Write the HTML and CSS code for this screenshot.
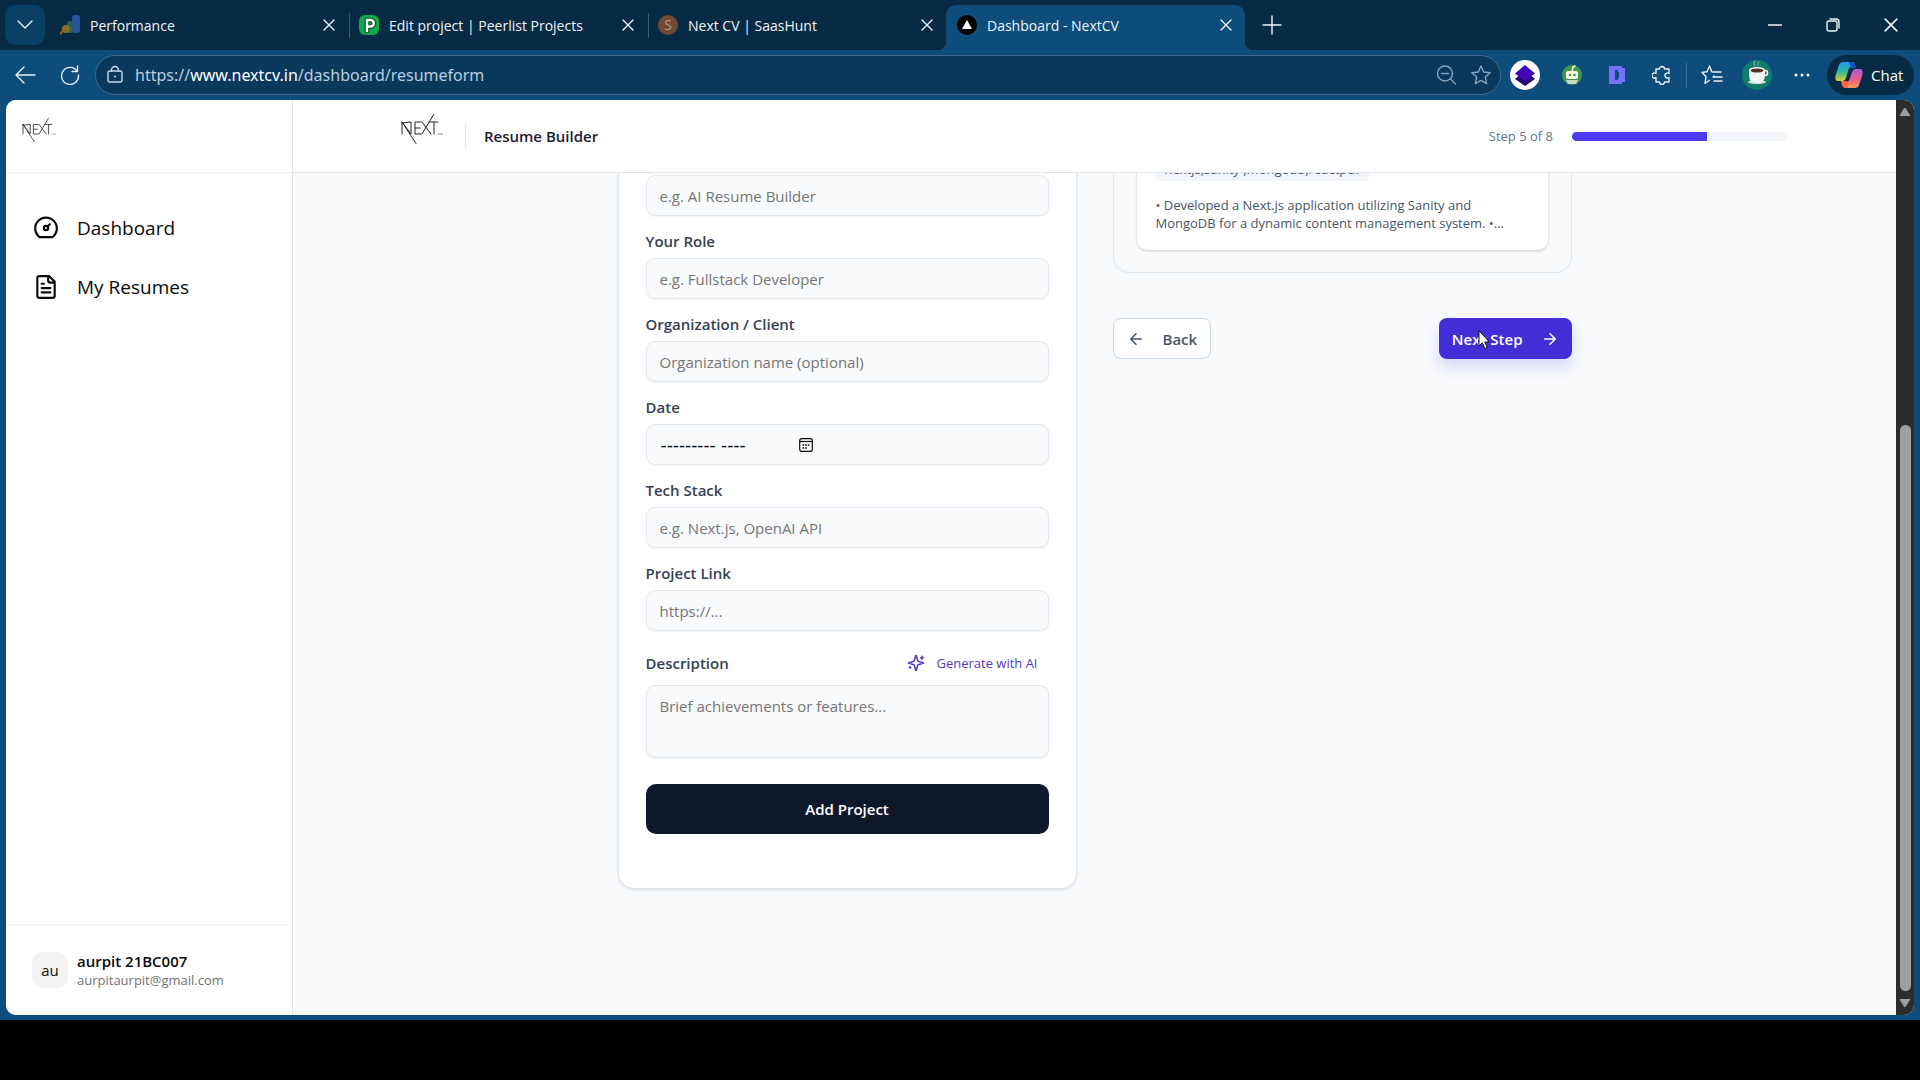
FILE: index.html
```html
<!DOCTYPE html>
<html lang="en">
<head>
<meta charset="utf-8">
<title>Dashboard - NextCV</title>
<link rel="stylesheet" href="styles.css">
</head>
<body>
<svg class="defs" aria-hidden="true">
  <defs>
    <symbol id="close" viewBox="0 0 12 12"><path d="M1 1l10 10M11 1L1 11" /></symbol>
    <symbol id="logo" viewBox="0 0 42 30">
      <path d="M1 20V8l9 12V8l-9 1M1 8l14 21.500M20 8h-6v12h6M14 14h5M21 8l9 12M21 20L33 0M28 8h9M33 8v12" />
      <path d="M37 20h5" stroke-opacity=".5" />
    </symbol>
  </defs>
</svg>
<div class="browser">
  <div class="tabstrip">
    <button class="tab-menu" aria-label="Tab actions"><svg width="16" height="10" viewBox="0 0 16 10"><path d="M1 1l7 7 7-7"/></svg></button>
    <div class="tabs">
      <div class="tab">
        <svg class="favicon" viewBox="0 0 20 20"><rect x="12" y="0" width="8" height="18" rx="3" fill="#2c539d"/><rect x="7" y="6" width="7" height="12" rx="3" fill="#27605c"/><circle cx="6" cy="14" r="4" fill="#8d6a27"/><path d="M4 15l-4 4" stroke="#8d6a27" stroke-width="2"/></svg>
        <span class="tab-title">Performance</span>
        <button class="tab-close" aria-label="Close tab"><svg width="12" height="12"><use href="#close"/></svg></button>
      </div>
      <div class="tab divided">
        <svg class="favicon" viewBox="0 0 20 20"><rect width="20" height="20" rx="6" fill="#12a84a"/><path d="M8 16V5h3.500a3.200 3.200 0 0 1 0 6.500H8" fill="none" stroke="#0a5a2a" stroke-width="5"/><path d="M8 16V5h3.500a3.200 3.200 0 0 1 0 6.500H8" fill="none" stroke="#fff" stroke-width="2.400"/></svg>
        <span class="tab-title">Edit project | Peerlist Projects</span>
        <button class="tab-close" aria-label="Close tab"><svg width="12" height="12"><use href="#close"/></svg></button>
      </div>
      <div class="tab divided">
        <span class="favicon letter-icon">S</span>
        <span class="tab-title">Next CV | SaasHunt</span>
        <button class="tab-close" aria-label="Close tab"><svg width="12" height="12"><use href="#close"/></svg></button>
      </div>
      <div class="tab active">
        <svg class="favicon" viewBox="0 0 20 20"><circle cx="10" cy="10" r="10"/><path d="M10 5l5 9H5z" fill="#fff"/></svg>
        <span class="tab-title">Dashboard - NextCV</span>
        <button class="tab-close" aria-label="Close tab"><svg width="12" height="12"><use href="#close"/></svg></button>
      </div>
    </div>
    <button class="new-tab" aria-label="New tab"><svg width="20" height="20" viewBox="0 0 20 20"><path d="M10 1v18M1 10h18"/></svg></button>
    <div class="window-controls">
      <button aria-label="Minimize"><svg width="14" height="14" viewBox="0 0 14 14"><path d="M0 7h14"/></svg></button>
      <button aria-label="Restore"><svg width="14" height="14" viewBox="0 0 14 14"><rect x="1" y="3" width="10" height="10" rx="2"/><path d="M4 1h6a3 3 0 0 1 3 3v6"/></svg></button>
      <button aria-label="Close window"><svg width="14" height="14" viewBox="0 0 12 12"><use href="#close"/></svg></button>
    </div>
  </div>

  <div class="toolbar">
    <button class="tool" aria-label="Back"><svg width="22" height="20" viewBox="0 0 22 20"><path d="M10 2l-8 8 8 8M2 10h19"/></svg></button>
    <button class="tool" aria-label="Reload"><svg width="20" height="20" viewBox="0 0 20 20"><path d="M17 6a8.500 8.500 0 1 0 1.500 4M17.500 1v5.500H12"/></svg></button>
    <div class="address">
      <svg width="18" height="20" viewBox="0 0 18 20"><rect x="2" y="6" width="14" height="11" rx="2"/><path d="M5.500 6V5a3.500 3.500 0 0 1 7 0v1"/><circle cx="9" cy="11.500" r="1" fill="#cbd9e8" stroke="none"/></svg>
      <span class="url">https://<b>www.nextcv.in</b>/dashboard/resumeform</span>
      <button class="in-address" aria-label="Zoom"><svg width="20" height="20" viewBox="0 0 20 20"><circle cx="9" cy="8.500" r="7.500"/><path d="M14.500 14l5 5M5.500 8.500h7"/></svg></button>
      <button class="in-address" aria-label="Favorite this page"><svg width="20" height="20" viewBox="0 0 20 20"><path d="M10 1l2.700 6 6.500.7-4.900 4.400 1.400 6.500L10 15.300l-5.700 3.300 1.400-6.500L.8 7.700 7.300 7z"/></svg></button>
    </div>
    <div class="extensions">
      <button aria-label="Layers extension"><svg width="30" height="30" viewBox="0 0 30 30"><circle cx="15" cy="15" r="15" fill="#fff"/><path d="M15 10l10 9-10 7-10-7z" fill="#260070"/><path d="M15 5l10 8.500L15 21 5 13.500z" fill="#4305b5"/></svg></button>
      <button aria-label="Robot extension"><svg width="20" height="20" viewBox="0 0 20 20"><circle cx="10" cy="10" r="10" fill="#439650"/><path d="M10 7l1-5 2-1" stroke="#f3f6dc" stroke-width="1.500" fill="none"/><rect x="4" y="6" width="12" height="8" rx="2" fill="#f3f6dc"/><circle cx="8" cy="10" r="1.300" fill="#439650"/><circle cx="12.500" cy="10" r="1.300" fill="#439650"/><path d="M5 16h10M6 18h8" stroke="#f3f6dc" stroke-width="1.500"/></svg></button>
      <button aria-label="D extension"><svg width="16" height="18" viewBox="0 0 16 18"><path fill-rule="evenodd" fill="#7770fb" d="M0 0h13v2h3v14h-3v2H0zM6 4v10h3v-2h1V6H9V4z"/></svg></button>
      <button aria-label="Extensions"><svg width="20" height="20" viewBox="0 0 20 20"><path d="M4 4h3.500a2.500 2.500 0 1 1 5 0H17v4.500a2.500 2.500 0 1 0 0 4V17h-4.500a2.500 2.500 0 1 1-5 0H4v-4.500a2.500 2.500 0 1 1 0-4z"/></svg></button>
      <span class="rule"></span>
      <button aria-label="Favorites"><svg width="22" height="20" viewBox="0 0 22 20"><path d="M12 12l1-1M13 7l-2.200-.2L8.500 1 6 6.800 1 7.400l4 4.200L4 18.500l4.500-3.300M12.500 7H20M13 12h8M13 16h8"/></svg></button>
      <button aria-label="Profile"><svg width="30" height="30" viewBox="0 0 30 30"><circle cx="15" cy="15" r="15" fill="#0e7d6a"/><ellipse cx="15" cy="22" rx="9" ry="2" fill="#cfd9d6"/><circle cx="23" cy="13" r="2.500" fill="none" stroke="#fff" stroke-width="1.500"/><path d="M7 10h16v5q0 8-8 8t-8-8z" fill="#f4f4f2"/><ellipse cx="15" cy="10" rx="8" ry="3" fill="#fff"/><ellipse cx="15" cy="10.500" rx="6.500" ry="2" fill="#59301f"/><path d="M13 6q-2-2 0-5M16 5q-1-1 1-3" stroke="#64aa9e" fill="none"/></svg></button>
      <button aria-label="Settings and more"><svg width="18" height="4" viewBox="0 0 18 4"><g fill="#fff" stroke="none"><circle cx="3" cy="2" r="1.500"/><circle cx="9" cy="2" r="1.500"/><circle cx="15" cy="2" r="1.500"/></g></svg></button>
    </div>
    <button class="chat">
      <svg width="28" height="26" viewBox="0 0 28 26">
        <defs>
          <linearGradient id="cool" x1="0" y1="0" x2="0" y2="1"><stop offset="0" stop-color="#209bf0"/><stop offset=".5" stop-color="#29b99f"/><stop offset="1" stop-color="#e9cb32"/></linearGradient>
          <linearGradient id="warm" x1="0" y1="0" x2="0" y2="1"><stop offset="0" stop-color="#a75bdf"/><stop offset=".5" stop-color="#ec5b8e"/><stop offset="1" stop-color="#fc9a52"/></linearGradient>
        </defs>
        <path d="M8 0h9q3 0 3 5h-4q-2 0-3 4l-2 7q-1 3-4 3H3q-4 0-2-7l3-9q1-3 4-3z" fill="url(#cool)"/>
        <path d="M14 0h3q3 0 4 6h-5z" fill="#1c4fd0"/>
        <path d="M20 26h-9q-3 0-4-6h4q3 0 4-4l2-6q1-3 4-3h4q4 0 2 7l-3 9q-1 3-4 3z" fill="url(#warm)"/>
        <path d="M13 26h-3q-3 0-4-7h6z" fill="#f5683c"/>
      </svg>
      Chat
    </button>
  </div>

  <div class="viewport">
    <aside class="sidebar">
      <div class="brand"><svg width="34" height="24" role="img" aria-label="NEXT"><use href="#logo"/></svg></div>
      <nav class="nav">
        <a href="#dashboard"><svg width="26" height="26" viewBox="0 0 24 24"><path d="M6 20.400a10 10 0 1 1 12 0zM13.400 10.600L15.500 8.500"/><circle cx="12" cy="12" r="2"/></svg>Dashboard</a>
        <a href="#resumes"><svg width="26" height="26" viewBox="0 0 24 24"><path d="M15 2H6a2 2 0 0 0-2 2v16a2 2 0 0 0 2 2h12a2 2 0 0 0 2-2V7zM14 2v4a2 2 0 0 0 2 2h4M10 9H8M16 13H8M16 17H8"/></svg>My Resumes</a>
      </nav>
      <div class="user">
        <span class="avatar">au</span>
        <div><div class="user-name">aurpit 21BC007</div><div class="user-mail">aurpitaurpit@gmail.com</div></div>
      </div>
    </aside>

    <div class="page">
      <header class="page-header">
        <svg class="header-logo" width="42" height="30" role="img" aria-label="NEXT"><use href="#logo"/></svg>
        <h1>Resume Builder</h1>
        <span class="step">Step 5 of 8</span>
        <div class="progress"><div class="progress-fill" style="width:62.5%"></div></div>
      </header>
      <main class="content">
        <form class="form-card">
          <input class="field" type="text" aria-label="Project title" placeholder="e.g. AI Resume Builder">
          <label for="role">Your Role</label>
          <input class="field" id="role" type="text" placeholder="e.g. Fullstack Developer">
          <label for="org">Organization / Client</label>
          <input class="field" id="org" type="text" placeholder="Organization name (optional)">
          <label for="date">Date</label>
          <div class="field date-field">
            <input id="date" type="text" value="--------- ----">
            <button type="button" aria-label="Pick a month"><svg width="14" height="14" viewBox="0 0 14 14"><rect x=".7" y=".7" width="12.600" height="12.600" rx="2"/><path d="M1 3.500h12"/><path d="M3.500 7h7M3.500 10h5" stroke-width="1.600" stroke-dasharray="1.600 1"/></svg></button>
          </div>
          <label for="stack">Tech Stack</label>
          <input class="field" id="stack" type="text" placeholder="e.g. Next.js, OpenAI API">
          <label for="link">Project Link</label>
          <input class="field" id="link" type="text" placeholder="https://...">
          <div class="desc-row">
            <label for="desc">Description</label>
            <button type="button" class="generate"><svg width="18" height="18" viewBox="0 0 24 24"><path d="M9.940 15.500A2 2 0 0 0 8.500 14.060l-6.140-1.580a.5.5 0 0 1 0-.96L8.500 9.940A2 2 0 0 0 9.940 8.500l1.580-6.140a.5.5 0 0 1 .96 0l1.580 6.140a2 2 0 0 0 1.440 1.440l6.140 1.580a.5.5 0 0 1 0 .96l-6.140 1.580a2 2 0 0 0-1.440 1.440l-1.580 6.140a.5.5 0 0 1-.96 0zM20 3v4M22 5h-4M4 17v2M5 18H3"/></svg>Generate with AI</button>
          </div>
          <textarea class="field" id="desc" placeholder="Brief achievements or features..."></textarea>
          <button type="button" class="add">Add Project</button>
        </form>
        <section class="side">
          <div class="preview">
            <article class="project">
              <span class="tag">nextjs,sanity ,mongodb,reactpdf</span>
              <p>• Developed a Next.js application utilizing Sanity and MongoDB for a dynamic content management system. •...</p>
            </article>
          </div>
          <div class="actions">
            <button type="button" class="back"><svg width="18" height="18" viewBox="0 0 24 24"><path d="M12 19l-7-7 7-7M19 12H5"/></svg>Back</button>
            <button type="button" class="next">Next Step<svg width="18" height="18" viewBox="0 0 24 24"><path d="M5 12h14M12 5l7 7-7 7"/></svg>
              <svg class="cursor" width="12" height="20" viewBox="0 0 12 20"><path d="M1 1v15l3.300-3.200L6.800 18.500l2.400-1-2.400-5.500H11z"/></svg>
            </button>
          </div>
        </section>
      </main>
    </div>
    <div class="scrollbar">
      <svg width="10" height="8" viewBox="0 0 10 8"><path d="M5 0l5 8H0z"/></svg>
      <div class="thumb"></div>
      <svg width="10" height="8" viewBox="0 0 10 8"><path d="M5 8l5-8H0z"/></svg>
    </div>
  </div>
</div>
</body>
</html>
```
FILE: styles.css
```css
* { box-sizing: border-box; }
html, body { height: 100%; }
body {
  margin: 0;
  background: #000;
  font-family: "Open Sans", "Noto Sans", sans-serif;
  font-size: 15px;
  color: #0a0a0a;
}
button {
  margin: 0;
  padding: 0;
  border: 0;
  background: none;
  color: inherit;
  font: inherit;
}
button, a { cursor: default; }
svg { display: block; flex: none; fill: none; stroke: currentColor; stroke-width: 1.4; stroke-linecap: round; stroke-linejoin: round; }
.defs { position: absolute; width: 0; height: 0; }
symbol { overflow: visible; }

/* Browser chrome */
.browser {
  display: flex;
  flex-direction: column;
  height: calc(100% - 60px);
  background: #0d4c7b;
}
.tabstrip {
  display: flex;
  align-items: center;
  flex: none;
  height: 50px;
  background: #072b44;
  color: #eef5fa;
  font-size: 14px;
}
.tab-menu {
  display: grid;
  place-items: center;
  width: 40px;
  height: 40px;
  margin: 0 4px 0 5px;
  border-radius: 10px;
  background: #0b4066;
}
.tabs { display: flex; align-self: stretch; padding-top: 5px; }
.tab {
  position: relative;
  display: flex;
  align-items: center;
  width: 299px;
  padding: 0 13px 5px 11px;
}
.favicon { flex: none; width: 20px; height: 20px; margin-right: 10px; stroke: none; }
svg.favicon { fill: #000; }
.letter-icon {
  border-radius: 50%;
  background: #6f4a35;
  color: #b09a8c;
  line-height: 20px;
  text-align: center;
}
.divided::before {
  content: "";
  position: absolute;
  left: 1px;
  top: 8px;
  width: 1px;
  height: 25px;
  background: #3d5c72;
}
.tab-title { flex: 1; white-space: nowrap; }
.active { border-radius: 10px 10px 0 0; background: #0d4c7b; }
.active::before, .active::after {
  content: "";
  position: absolute;
  bottom: 0;
  width: 8px;
  height: 8px;
}
.active::before { right: 100%; background: radial-gradient(circle at 0 0, transparent 8px, #0d4c7b 8px); }
.active::after { left: 100%; background: radial-gradient(circle at 100% 0, transparent 8px, #0d4c7b 8px); }
.new-tab { margin-left: 17px; }
.window-controls { display: flex; margin-left: auto; }
.window-controls button { display: grid; place-items: center; width: 58px; height: 40px; }

.toolbar {
  display: flex;
  align-items: center;
  flex: none;
  height: 50px;
  padding-right: 6px;
  color: #e8f1f8;
}
.tool { display: grid; place-items: center; width: 45px; height: 40px; }
.tool:first-child { margin-left: 2px; }
.address {
  display: flex;
  align-items: center;
  flex: 1;
  height: 40px;
  margin-left: 3px;
  padding: 0 9px 0 10px;
  border: 1px solid #3f6b90;
  border-radius: 20px;
  background: #09385d;
  color: #cbd9e8;
}
.url { flex: 1; padding-left: 11px; font-family: "Noto Sans", sans-serif; font-size: 16px; color: #b9cde0; white-space: nowrap; }
.url b { font-weight: 400; color: #fff; }
.in-address { width: 20px; margin-left: 15px; color: #86a4bd; }
.extensions { display: flex; align-items: center; }
.extensions button { display: grid; place-items: center; width: 45px; height: 40px; }
.extensions button:first-child { width: 48px; }
.extensions button:first-child svg, .extensions button:nth-child(2) svg, .extensions button:nth-child(3) svg, .extensions button:nth-child(7) svg { stroke: none; }
.rule { width: 1px; height: 25px; margin: 0 2px; background: #3c7099; }
.chat {
  display: flex;
  align-items: center;
  gap: 8px;
  width: 87px;
  height: 40px;
  margin-left: 3px;
  padding-left: 8px;
  border-radius: 20px;
  background: #072b44;
  color: #fff;
}
.chat svg { stroke: none; }

/* Web page */
.viewport {
  display: flex;
  flex: 1;
  min-height: 0;
  margin: 0 6px 5px;
  border-radius: 10px;
  overflow: hidden;
  background: #f8fafc;
}
.sidebar {
  display: flex;
  flex-direction: column;
  flex: none;
  width: 287px;
  border-right: 1px solid #e5e5e5;
  background: #fff;
}
.brand { height: 73px; padding: 18px 16px; border-bottom: 1px solid #f0f0f0; color: #222; }
.brand svg, .header-logo { stroke-width: 1; }
.nav { flex: 1; padding: 25px 27px; font-size: 19px; }
.nav a {
  display: flex;
  align-items: center;
  gap: 18px;
  height: 59px;
  color: #0a0a0a;
  text-decoration: none;
}
.nav svg { stroke-width: 2; }
.user {
  display: flex;
  align-items: center;
  gap: 9px;
  height: 91px;
  padding: 0 26px;
  border-top: 1px solid #f2f2f2;
}
.avatar { width: 36px; border-radius: 10px; background: #f3f3f3; line-height: 36px; text-align: center; }
.user-name { font-size: 15px; font-weight: 600; line-height: 20px; }
.user-mail { font-size: 13px; line-height: 18px; color: #737373; }

.page { display: flex; flex-direction: column; flex: 1; min-width: 0; }
.page-header {
  display: flex;
  align-items: center;
  flex: none;
  height: 73px;
  padding: 0 108px;
  border-bottom: 1px solid #e2e8f0;
  background: #fff;
}
.header-logo { margin-bottom: 14px; color: #222; }
h1 {
  margin: 0 auto 0 22px;
  padding-left: 18px;
  border-left: 1px solid #e2e8f0;
  font-size: 15px;
  font-weight: 600;
  line-height: 28px;
  color: #1d1d35;
}
.step { font-size: 13px; font-weight: 500; color: #64748b; }
.progress { width: 216px; height: 9px; margin-left: 19px; border-radius: 5px; overflow: hidden; background: #f1f5f9; }
.progress-fill { height: 100%; background: #4f39f6; }

.content {
  display: grid;
  grid-template-columns: 459px 459px;
  justify-content: center;
  align-items: start;
  gap: 36px;
  flex: 1;
  min-height: 0;
}
.form-card {
  display: flex;
  flex-direction: column;
  padding: 2px 27px 54px;
  border: 1px solid #e2e8f0;
  border-top: 0;
  border-radius: 0 0 16px 16px;
  background: #fff;
  box-shadow: 0 1px 3px rgba(0, 0, 0, .12);
}
label { margin: 14px 0 6px; font-size: 15px; font-weight: 600; line-height: 22px; color: #364153; }
.field {
  width: 100%;
  height: 41px;
  padding: 0 13px;
  border: 1px solid #e2e8f0;
  border-radius: 9px;
  outline: 0;
  background: #f8fafc;
  box-shadow: 0 1px 2px rgba(0, 0, 0, .05);
  font: inherit;
  color: #0a0a0a;
}
.field::placeholder { color: #757575; opacity: 1; }
.date-field { display: flex; align-items: center; }
.date-field input { width: 139px; padding: 0 1px; border: 0; outline: 0; background: none; font: 17px "DejaVu Sans", sans-serif; color: #0a0a0a; }
.date-field svg { stroke-width: 1.2; stroke-linecap: butt; }
.desc-row { display: flex; align-items: center; justify-content: space-between; height: 38px; margin: 13px 0 3px; }
.desc-row label { margin: 0; }
.generate { display: flex; align-items: center; gap: 11px; padding-right: 11px; font-size: 13px; font-weight: 500; color: #5238c4; }
.generate svg { stroke-width: 2; }
textarea.field { display: block; height: 73px; padding: 9px 13px; line-height: 22px; resize: none; }
.add { height: 50px; margin-top: 26px; border-radius: 10px; background: #0f172b; color: #fff; font-weight: 600; }

.preview {
  padding: 0 23px 22px;
  border: 1px solid #e2e8f0;
  border-top: 0;
  border-radius: 0 0 16px 16px;
  overflow: hidden;
}
.project {
  padding: 0 19px 18px;
  border-radius: 0 0 10px 10px;
  background: #fff;
  box-shadow: 0 1px 3px rgba(0, 0, 0, .2);
}
.tag {
  display: block;
  width: max-content;
  margin-top: -16px;
  padding: 0 9px;
  border-radius: 4px;
  background: #f1f5f9;
  font-size: 13px;
  font-weight: 500;
  line-height: 24px;
  color: #45556c;
}
.project p { margin: 0; padding-top: 15px; font-size: 13px; line-height: 18px; color: #4a5565; }
.actions { display: flex; justify-content: space-between; margin-top: 45px; }
.actions button { display: flex; align-items: center; height: 41px; border-radius: 8px; font-weight: 600; }
.actions svg { stroke-width: 2; }
.back { gap: 18px; padding: 0 13px; border: 1px solid #cad5e2; background: #fff; color: #45556c; }
.next { position: relative; gap: 18px; padding: 0 13px; background: #432dd7; color: #fff; box-shadow: 0 8px 14px rgba(79, 57, 246, .18); }
.actions .cursor { position: absolute; left: 39px; top: 12px; fill: #fff; stroke: #111; stroke-width: 1; }

.scrollbar {
  display: flex;
  flex-direction: column;
  align-items: center;
  flex: none;
  width: 18px;
  padding: 8px 0;
  background: #2c2c2c;
}
.scrollbar svg { fill: #a0a0a0; stroke: #a0a0a0; stroke-width: 1; }
.thumb { width: 11px; height: 63%; margin: auto 0 8px; border-radius: 6px; background: #9f9f9f; }
```
